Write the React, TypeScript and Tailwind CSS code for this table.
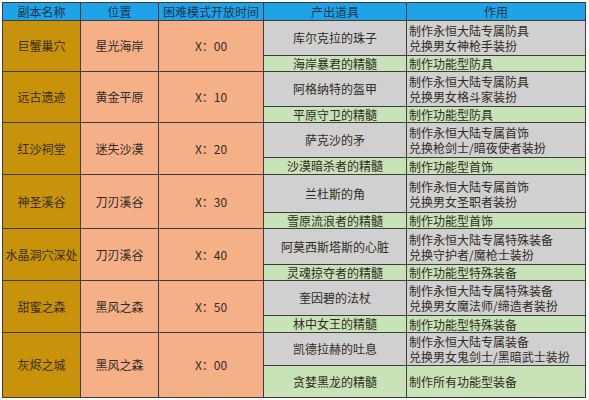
import React from "react";

type Sub = { item: string; uses: string[]; h: number; green?: boolean };
type Row = { name: string; loc: string; time: string; h: number; subs: Sub[] };

const rows: Row[] = [
  {
    name: "巨蟹巢穴", loc: "星光海岸", time: "X：00", h: 51,
    subs: [
      { item: "库尔克拉的珠子", uses: ["制作永恒大陆专属防具", "兑换男女神枪手装扮"], h: 35 },
      { item: "海岸暴君的精髓", uses: ["制作功能型防具"], h: 16, green: true },
    ],
  },
  {
    name: "远古遗迹", loc: "黄金平原", time: "X：10", h: 51,
    subs: [
      { item: "阿格纳特的盔甲", uses: ["制作永恒大陆专属防具", "兑换男女格斗家装扮"], h: 35 },
      { item: "平原守卫的精髓", uses: ["制作功能型防具"], h: 16, green: true },
    ],
  },
  {
    name: "红沙祠堂", loc: "迷失沙漠", time: "X：20", h: 52,
    subs: [
      { item: "萨克沙的矛", uses: ["制作永恒大陆专属首饰", "兑换枪剑士/暗夜使者装扮"], h: 35 },
      { item: "沙漠暗杀者的精髓", uses: ["制作功能型首饰"], h: 17, green: true },
    ],
  },
  {
    name: "神圣溪谷", loc: "刀刃溪谷", time: "X：30", h: 54,
    subs: [
      { item: "兰杜斯的角", uses: ["制作永恒大陆专属首饰", "兑换男女圣职者装扮"], h: 38 },
      { item: "雪原流浪者的精髓", uses: ["制作功能型首饰"], h: 16, green: true },
    ],
  },
  {
    name: "水晶洞穴深处", loc: "刀刃溪谷", time: "X：40", h: 52,
    subs: [
      { item: "阿莫西斯塔斯的心脏", uses: ["制作永恒大陆专属特殊装备", "兑换守护者/魔枪士装扮"], h: 36 },
      { item: "灵魂掠夺者的精髓", uses: ["制作功能型特殊装备"], h: 16, green: true },
    ],
  },
  {
    name: "甜蜜之森", loc: "黑风之森", time: "X：50", h: 52,
    subs: [
      { item: "奎因碧的法杖", uses: ["制作永恒大陆专属特殊装备", "兑换男女魔法师/缔造者装扮"], h: 35 },
      { item: "林中女王的精髓", uses: ["制作功能型特殊装备"], h: 17, green: true },
    ],
  },
  {
    name: "灰烬之城", loc: "黑风之森", time: "X：00", h: 65,
    subs: [
      { item: "凯德拉赫的吐息", uses: ["制作永恒大陆专属装备", "兑换男女鬼剑士/黑暗武士装扮"], h: 33 },
      { item: "贪婪黑龙的精髓", uses: ["制作所有功能型装备"], h: 32, green: true },
    ],
  },
];

export default function App() {
  return (
    <div
      className="w-[589px] h-[400px] bg-white pt-[2px] pl-[2px] text-[12px] text-[#302b22]"
      style={{ fontFamily: '"Noto Sans CJK SC", "Noto Sans", sans-serif' }}
    >
      <div className="w-[584px] border-l border-t border-[#3c3c3c] flex flex-col">
        <div className="flex h-[18px] bg-[#1fa3e6] text-[#1d3550] leading-[17px]">
          <div className="w-[78px] border-r border-b border-[#3c3c3c] text-center">副本名称</div>
          <div className="w-[78px] border-r border-b border-[#3c3c3c] text-center">位置</div>
          <div className="w-[105px] border-r border-b border-[#3c3c3c] text-center">困难模式开放时间</div>
          <div className="w-[143px] border-r border-b border-[#3c3c3c] text-center">产出道具</div>
          <div className="w-[179px] border-r border-b border-[#3c3c3c] text-center">作用</div>
        </div>
        {rows.map((r) => (
          <div key={r.name} className="flex" style={{ height: r.h }}>
            <div className="w-[78px] shrink-0 bg-[#c8920a] border-r border-b border-[#3c3c3c] flex items-center justify-center text-[#3a2e10]">
              {r.name}
            </div>
            <div className="w-[78px] shrink-0 bg-[#f5b088] border-r border-b border-[#3c3c3c] flex items-center justify-center">
              {r.loc}
            </div>
            <div className="w-[105px] shrink-0 bg-[#f5b088] border-r border-b border-[#3c3c3c] flex items-center justify-center">
              {r.time}
            </div>
            <div className="flex flex-col">
              {r.subs.map((s) => (
                <div
                  key={s.item}
                  className={`flex ${s.green ? "bg-[#c8e3b7]" : "bg-[#d0d0d0]"}`}
                  style={{ height: s.h }}
                >
                  <div className="w-[143px] shrink-0 border-r border-b border-[#3c3c3c] flex items-center justify-center">
                    {s.item}
                  </div>
                  <div className="w-[179px] shrink-0 border-r border-b border-[#3c3c3c] flex flex-col justify-center pl-[2px] leading-[15px]">
                    {s.uses.map((u) => (
                      <div key={u}>{u}</div>
                    ))}
                  </div>
                </div>
              ))}
            </div>
          </div>
        ))}
      </div>
    </div>
  );
}
